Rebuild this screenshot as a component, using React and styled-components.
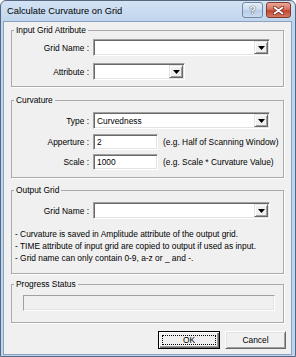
import React from "react";
import styled, { createGlobalStyle } from "styled-components";

const GlobalStyle = createGlobalStyle`
  html, body {
    margin: 0;
    padding: 0;
    background: #ffffff;
  }
  body {
    font-family: "Liberation Sans", Arial, sans-serif;
  }
`;

const Window = styled.div`
  box-sizing: border-box;
  width: 296px;
  height: 357px;
  display: flex;
  flex-direction: column;
  padding: 0 3px 1px 2px;
  border: 1px solid #56687f;
  border-radius: 6px 6px 0 0;
  background: linear-gradient(#d3e3f5, #bfd4ed 21px, #bfd4ed);
`;

const TitleBar = styled.div`
  height: 20px;
  display: flex;
  align-items: flex-start;
  padding: 0 1px 0 4px;
`;

const Title = styled.div`
  flex: 1;
  font-size: 9.3px;
  line-height: 20px;
  color: #000;
`;

const CapButton = styled.div`
  box-sizing: border-box;
  width: ${(p) => p.$w}px;
  height: 16px;
  margin: 1px 0 0 ${(p) => p.$ml || 0}px;
  border: 1px solid ${(p) => (p.$close ? "#7e3a30" : "#7088a6")};
  border-radius: 3px;
  background: ${(p) =>
    p.$close
      ? "linear-gradient(#eaa898, #d8715d 45%, #c2442f 55%, #d57a62)"
      : "linear-gradient(#e6eef8, #cddcef 45%, #b8cde6 55%, #cadbef)"};
  display: flex;
  align-items: center;
  justify-content: center;
  color: #f4f7fb;
  font-size: 11px;
  font-weight: bold;
  text-shadow: 0 0 1px #3c4d63, 0 0 1px #3c4d63;
`;

const Client = styled.div`
  flex: 1;
  display: flex;
  flex-direction: column;
  background: #f0f0f0;
  border: 1px solid #8aa2bf;
  padding: 3px 7px 0 7px;
  font-size: 8.4px;
  color: #000;
`;

const Group = styled.fieldset`
  margin: ${(p) => p.$mt || 0}px 0 0;
  padding: ${(p) => p.$pt}px 0 ${(p) => p.$pb}px 0;
  border: 1px solid #aaaaaa;
  box-shadow: 1px 1px 0 #ffffff;
  min-width: 0;
  display: flex;
  flex-direction: column;
  gap: ${(p) => p.$gap || 0}px;
`;

const Legend = styled.legend`
  margin-left: 2px;
  padding: 0 2px;
  font-size: 8.4px;
  line-height: 10px;
`;

const Row = styled.div`
  display: flex;
  align-items: center;
  margin-top: ${(p) => p.$mt || 0}px;
`;

const Label = styled.div`
  width: 77px;
  padding-right: 4px;
  text-align: right;
  white-space: nowrap;
`;

const Sunken = styled.div`
  box-sizing: border-box;
  width: ${(p) => p.$w}px;
  height: ${(p) => p.$h || 16}px;
  display: flex;
  align-items: center;
  padding-left: 3px;
  background: #ffffff;
  border: 1px solid;
  border-color: #a0a0a0 #ffffff #ffffff #a0a0a0;
  box-shadow: inset 1px 1px 0 #696969, inset -1px -1px 0 #e3e3e3;
  white-space: nowrap;
`;

const DropButton = styled.div`
  box-sizing: border-box;
  align-self: stretch;
  width: 14px;
  margin: 1px 1px 1px auto;
  display: flex;
  align-items: center;
  justify-content: center;
  background: #f0f0f0;
  border: 1px solid;
  border-color: #e3e3e3 #696969 #696969 #e3e3e3;
  box-shadow: inset 1px 1px 0 #ffffff, inset -1px -1px 0 #a0a0a0;
`;

const Hint = styled.div`
  margin-left: 5px;
  white-space: nowrap;
`;

const Notes = styled.div`
  margin-top: 9px;
  padding-left: 3px;
  line-height: 12px;
`;

const Progress = styled.div`
  height: 16px;
  margin: 0 8px 0 11px;
  box-sizing: border-box;
  background: #f0f0f0;
  border: 1px solid;
  border-color: #a0a0a0 #ffffff #ffffff #a0a0a0;
  box-shadow: inset -1px -1px 0 #e3e3e3;
`;

const ButtonRow = styled.div`
  display: flex;
  justify-content: flex-end;
  gap: 5px;
  margin: 8px -2px 0 0;
`;

const Button = styled.button`
  box-sizing: border-box;
  width: ${(p) => p.$w}px;
  height: 18px;
  padding: 3px;
  display: flex;
  font-family: inherit;
  font-size: 8.4px;
  color: #000;
  background: #f0f0f0;
  border: 1px solid;
  border-color: ${(p) => (p.$default ? "#000000" : "#ffffff #696969 #696969 #ffffff")};
  box-shadow: ${(p) =>
    p.$default
      ? "inset 1px 1px 0 #ffffff, inset -1px -1px 0 #696969, inset -2px -2px 0 #a0a0a0"
      : "inset 1px 1px 0 #e3e3e3, inset -1px -1px 0 #a0a0a0"};
`;

const Focus = styled.span`
  flex: 1;
  display: flex;
  align-items: center;
  justify-content: center;
  border: 1px dotted ${(p) => (p.$on ? "#000" : "transparent")};
`;

const Arrow = () => (
  <svg width="7" height="4" viewBox="0 0 7 4">
    <path d="M0 0h7L3.5 4z" fill="#000" />
  </svg>
);

const CloseGlyph = () => (
  <svg width="11" height="9" viewBox="0 0 11 9">
    <path d="M1.5 1.5L9.5 7.5M9.5 1.5L1.5 7.5" stroke="#6b241a" strokeWidth="3.4" strokeLinecap="round" />
    <path d="M1.5 1.5L9.5 7.5M9.5 1.5L1.5 7.5" stroke="#ffffff" strokeWidth="1.8" strokeLinecap="round" />
  </svg>
);

const Combo = ({ w, children }) => (
  <Sunken $w={w} $h={17}>
    {children}
    <DropButton>
      <Arrow />
    </DropButton>
  </Sunken>
);

export default function App() {
  return (
    <>
      <GlobalStyle />
      <Window>
        <TitleBar>
          <Title>Calculate Curvature on Grid</Title>
          <CapButton $w={21}>?</CapButton>
          <CapButton $w={25} $ml={3} $close>
            <CloseGlyph />
          </CapButton>
        </TitleBar>
        <Client>
          <Group $pt={4} $pb={6} $gap={7}>
            <Legend>Input Grid Attribute</Legend>
            <Row>
              <Label>Grid Name :</Label>
              <Combo w={177} />
            </Row>
            <Row>
              <Label>Attribute :</Label>
              <Combo w={92} />
            </Row>
          </Group>

          <Group $mt={8} $pt={7} $pb={7}>
            <Legend>Curvature</Legend>
            <Row>
              <Label>Type :</Label>
              <Combo w={177}>Curvedness</Combo>
            </Row>
            <Row $mt={5}>
              <Label>Apperture :</Label>
              <Sunken $w={65}>2</Sunken>
              <Hint>(e.g. Half of Scanning Window)</Hint>
            </Row>
            <Row $mt={4}>
              <Label>Scale :</Label>
              <Sunken $w={65}>1000</Sunken>
              <Hint>(e.g. Scale * Curvature Value)</Hint>
            </Row>
          </Group>

          <Group $mt={7} $pt={7} $pb={9}>
            <Legend>Output Grid</Legend>
            <Row>
              <Label>Grid Name :</Label>
              <Combo w={177} />
            </Row>
            <Notes>
              <div>- Curvature is saved in Amplitude attribute of the output grid.</div>
              <div>- TIME attribute of input grid are copied to output if used as input.</div>
              <div>- Grid name can only contain 0-9, a-z or _ and -.</div>
            </Notes>
          </Group>

          <Group $mt={5} $pt={6} $pb={11}>
            <Legend>Progress Status</Legend>
            <Progress />
          </Group>

          <ButtonRow>
            <Button $w={62} $default>
              <Focus $on>OK</Focus>
            </Button>
            <Button $w={61}>
              <Focus>Cancel</Focus>
            </Button>
          </ButtonRow>
        </Client>
      </Window>
    </>
  );
}
